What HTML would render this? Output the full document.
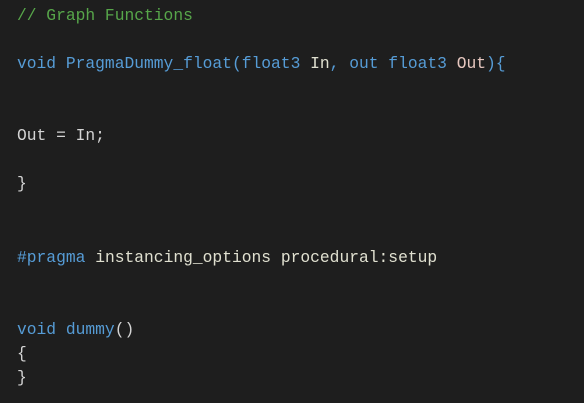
<!DOCTYPE html>
<html><head><meta charset="utf-8"><style>
html,body{margin:0;padding:0;background:#1e1e1e;width:584px;height:403px;overflow:hidden}
div{position:absolute;left:17px;white-space:pre;font-family:"Liberation Mono",monospace;font-size:16.3px;line-height:24px;height:24px;color:#d4d4d4}
.c{color:#57a64a}.k{color:#569cd6}.p{color:#e0e0d0}.o{color:#e8c8c0}
</style></head><body>
<div style="top:4px"><span class="c">// Graph Functions</span></div>
<div style="top:52px"><span class="k">void PragmaDummy_float(float3</span> <span class="p">In</span><span class="k">, out float3</span> <span class="o">Out</span><span class="k">){</span></div>
<div style="top:124px">Out = In;</div>
<div style="top:172px">}</div>
<div style="top:246px"><span class="k">#pragma</span> <span class="p">instancing_options procedural:setup</span></div>
<div style="top:318px"><span class="k">void dummy</span>()</div>
<div style="top:342px">{</div>
<div style="top:366px">}</div>
</body></html>
